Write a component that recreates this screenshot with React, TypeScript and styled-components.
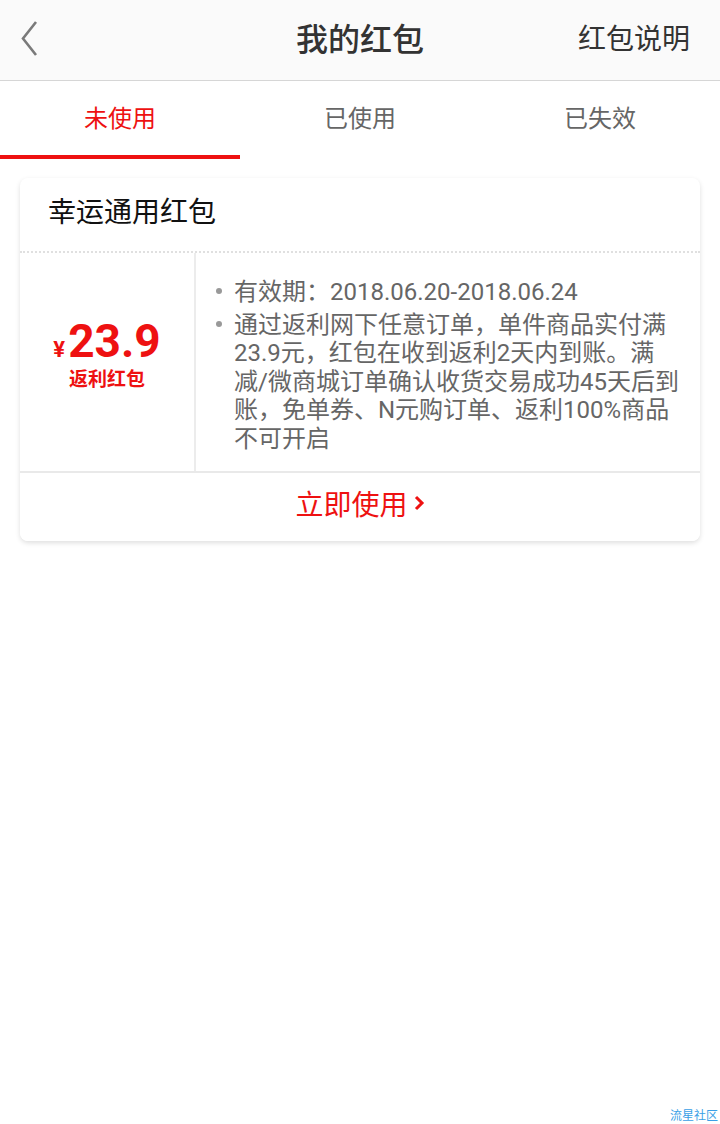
import React, { useState } from 'react';
import styled, { createGlobalStyle } from 'styled-components';

const GlobalStyle = createGlobalStyle`
  html, body {
    margin: 0;
    padding: 0;
    background: #fff;
  }
  body {
    font-family: Roboto, "Noto Sans CJK SC", sans-serif;
  }
`;

const Page = styled.div`
  position: relative;
  width: 720px;
  min-height: 1124px;
  background: #fff;
`;

const Header = styled.header`
  box-sizing: border-box;
  height: 81px;
  padding-bottom: 6px;
  display: grid;
  grid-template-columns: 160px 1fr 160px;
  align-items: center;
  background: #fafafa;
  border-bottom: 1px solid #d6d6d6;
`;

const BackButton = styled.button`
  justify-self: start;
  margin-left: 20px;
  padding: 0;
  border: none;
  background: none;
  display: flex;
  cursor: pointer;
`;

const Title = styled.h1`
  margin: 0;
  text-align: center;
  font-size: 32px;
  font-weight: 500;
  color: #333;
`;

const HeaderLink = styled.a`
  justify-self: end;
  margin-right: 30px;
  white-space: nowrap;
  font-size: 28px;
  color: #333;
  text-decoration: none;
`;

const Tabs = styled.nav`
  display: flex;
  height: 78px;
  background: #fff;
`;

const Tab = styled.div<{ $active?: boolean }>`
  box-sizing: border-box;
  flex: 1;
  display: flex;
  align-items: center;
  justify-content: center;
  padding-bottom: 4px;
  font-size: 24px;
  color: ${(p) => (p.$active ? '#ee1111' : '#666')};
  border-bottom: 4px solid ${(p) => (p.$active ? '#ee1111' : 'transparent')};
  cursor: pointer;
`;

const List = styled.div`
  padding: 19px 20px;
`;

const Card = styled.div`
  background: #fff;
  border-radius: 8px;
  box-shadow: 0 2px 5px rgba(0, 0, 0, 0.13);
  overflow: hidden;
`;

const CardTitle = styled.div`
  box-sizing: border-box;
  height: 75px;
  padding: 0 0 9px 28px;
  display: flex;
  align-items: center;
  font-size: 28px;
  color: #111;
  border-bottom: 2px dotted #e0e0e0;
`;

const CardBody = styled.div`
  display: flex;
  border-bottom: 2px solid #e9e9e9;
`;

const AmountCol = styled.div`
  width: 174px;
  flex-shrink: 0;
  display: flex;
  flex-direction: column;
  align-items: center;
  justify-content: center;
  padding-bottom: 14px;
  border-right: 2px solid #ececec;
  color: #ee1111;
`;

const Amount = styled.div`
  display: flex;
  align-items: baseline;
  line-height: 44px;
  font-weight: 700;
  font-size: 46px;
`;

const Yen = styled.span`
  font-size: 22px;
  margin-right: 3px;
`;

const AmountLabel = styled.div`
  margin-top: -4px;
  line-height: 24px;
  font-size: 19px;
  font-weight: 700;
`;

const Rules = styled.ul`
  flex: 1;
  margin: 0;
  padding: 25px 20px 18px 20px;
  list-style: none;
`;

const Rule = styled.li`
  position: relative;
  padding-left: 18px;
  font-size: 24px;
  line-height: 28.5px;
  color: #666;
  & + & {
    margin-top: 4px;
  }
  &::before {
    content: '';
    position: absolute;
    left: 0;
    top: 10px;
    width: 6px;
    height: 6px;
    border-radius: 50%;
    background: #999;
  }
`;

const UseButton = styled.button`
  width: 100%;
  height: 68px;
  padding: 0 0 8px;
  display: flex;
  align-items: center;
  justify-content: center;
  gap: 5px;
  border: none;
  background: #fff;
  font-family: inherit;
  font-size: 28px;
  color: #ee1111;
  cursor: pointer;
`;

const Watermark = styled.div`
  position: absolute;
  right: 2px;
  bottom: 0;
  font-size: 12px;
  line-height: 16px;
  color: #3a9fe6;
`;

const tabs = ['未使用', '已使用', '已失效'];

const App: React.FC = () => {
  const [active, setActive] = useState(0);

  return (
    <Page>
      <GlobalStyle />
      <Header>
        <BackButton aria-label="返回">
          <svg width="30" height="40" viewBox="0 0 30 40">
            <path d="M16 5 L3 21.5 L16 38" fill="none" stroke="#7a7a7a" strokeWidth="2.6" />
          </svg>
        </BackButton>
        <Title>我的红包</Title>
        <HeaderLink href="#">红包说明</HeaderLink>
      </Header>
      <Tabs>
        {tabs.map((t, i) => (
          <Tab key={t} $active={i === active} onClick={() => setActive(i)}>
            {t}
          </Tab>
        ))}
      </Tabs>
      <List>
        <Card>
          <CardTitle>幸运通用红包</CardTitle>
          <CardBody>
            <AmountCol>
              <Amount>
                <Yen>¥</Yen>23.9
              </Amount>
              <AmountLabel>返利红包</AmountLabel>
            </AmountCol>
            <Rules>
              <Rule>有效期：2018.06.20-2018.06.24</Rule>
              <Rule>
                通过返利网下任意订单，单件商品实付满23.9元，红包在收到返利2天内到账。满减/微商城订单确认收货交易成功45天后到账，免单券、N元购订单、返利100%商品不可开启
              </Rule>
            </Rules>
          </CardBody>
          <UseButton>
            立即使用
            <svg width="12" height="20" viewBox="0 0 12 20">
              <path d="M3 4 L9 10 L3 16" fill="none" stroke="#ee1111" strokeWidth="3" />
            </svg>
          </UseButton>
        </Card>
      </List>
      <Watermark>流星社区</Watermark>
    </Page>
  );
};

export default App;
